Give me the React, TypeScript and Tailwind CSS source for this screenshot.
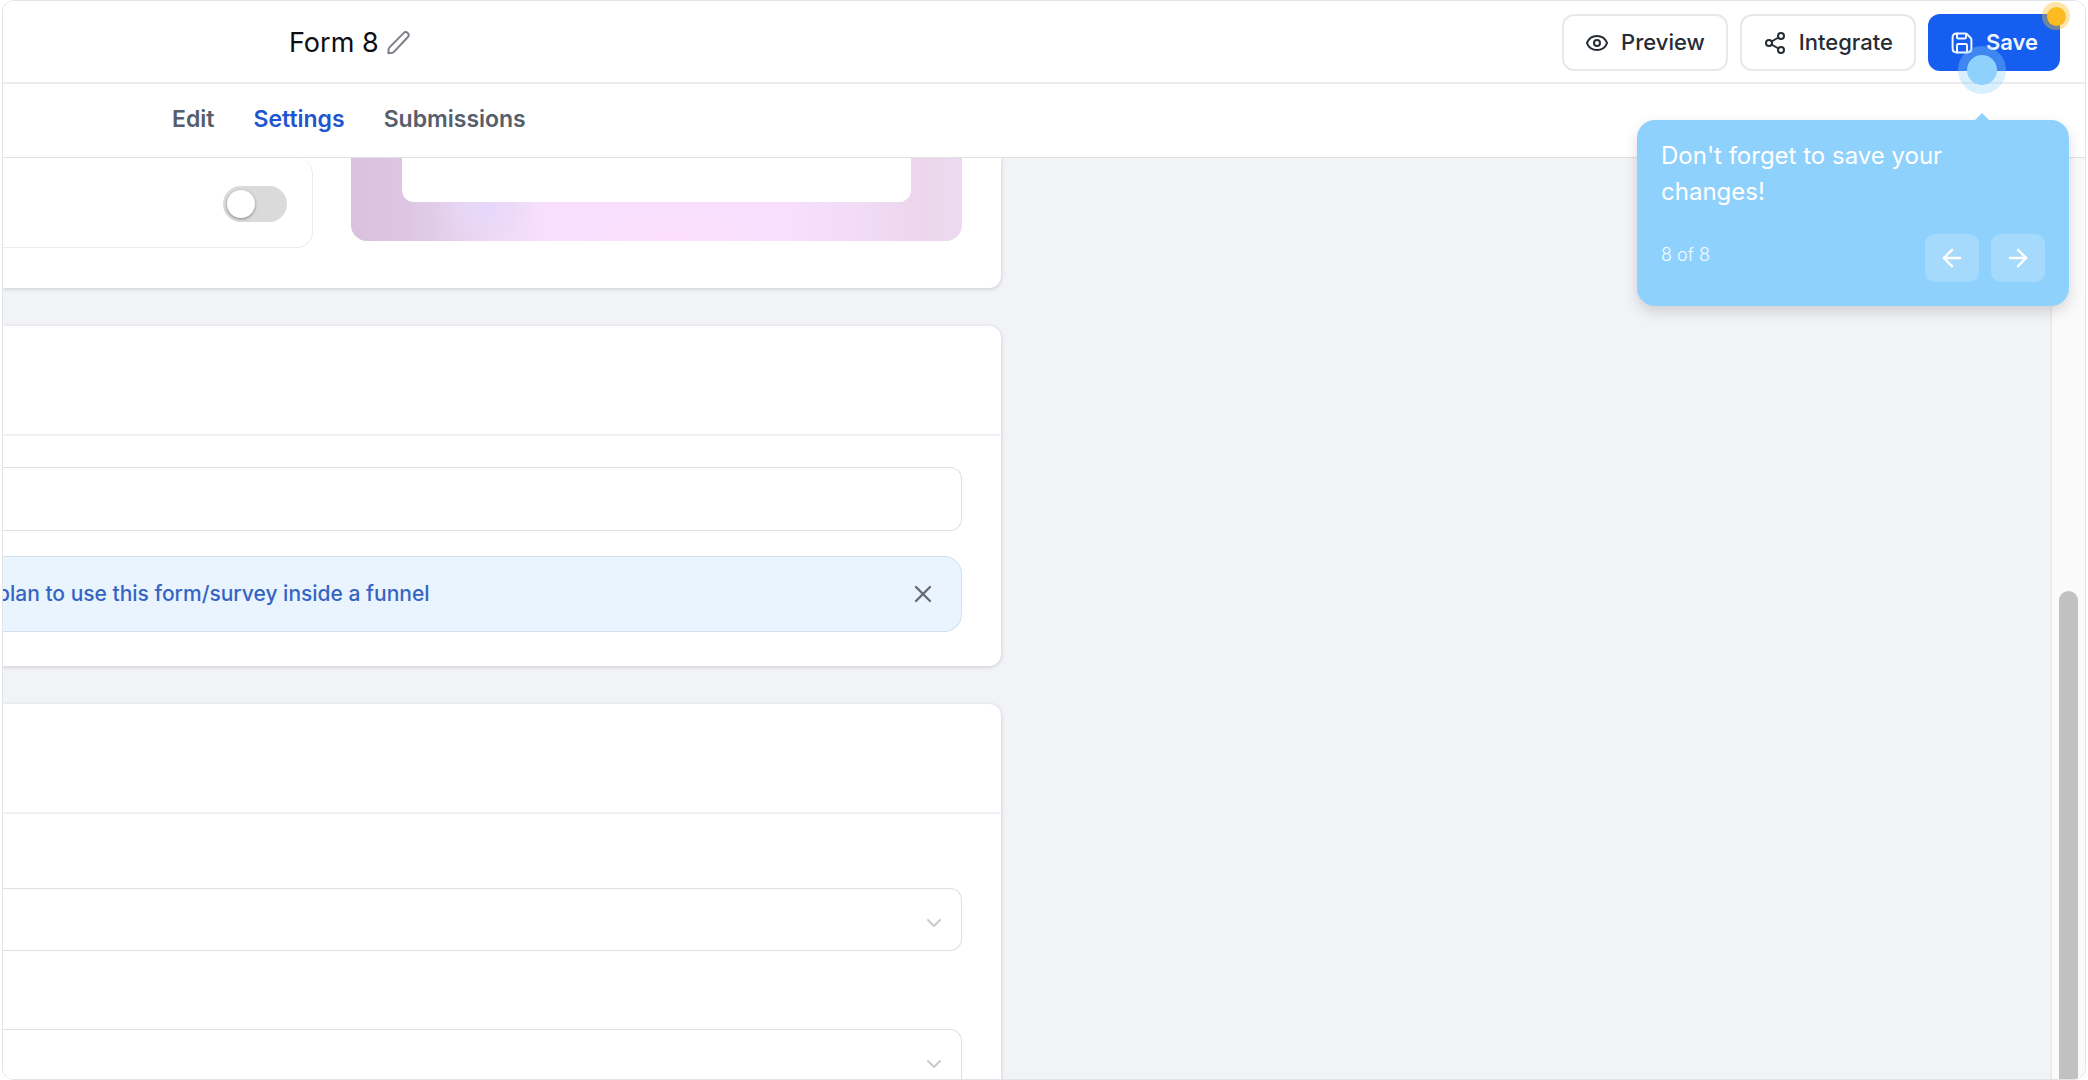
import { ArrowLeft, ArrowRight, ChevronDown, Eye, Share2, X } from 'lucide-react';

const tabs = [
  { name: 'Edit', href: '#edit', active: false },
  { name: 'Settings', href: '#settings', active: true },
  { name: 'Submissions', href: '#submissions', active: false },
];

function PencilIcon() {
  return (
    <svg viewBox="0 0 24 24" className="h-6 w-6" fill="none" stroke="currentColor" strokeWidth="2" strokeLinejoin="round">
      <path d="M1.4 22.2 L1.6 18.4 Q1.7 17.2 2.5 16.4 L16.6 2.1 A2.7 2.7 0 0 1 20.9 6 L7.2 20.6 Q6.4 21.5 5.2 21.7 Z" />
    </svg>
  );
}

function SaveIcon() {
  return (
    <svg viewBox="0 0 24 24" className="h-6 w-6" fill="none" stroke="currentColor" strokeWidth="2" strokeLinecap="round" strokeLinejoin="round">
      <path d="M7 2.6 V6.2 Q7 7.4 8.2 7.4 H14.8 Q16 7.4 16 6.2 V3.2" />
      <path d="M17 21.4 V14.2 Q17 13 15.8 13 H8.2 Q7 13 7 14.2 V21.4" />
      <path d="M21.4 9 V17.2 Q21.4 21.4 17.2 21.4 H6.8 Q2.6 21.4 2.6 17.2 V6.8 Q2.6 2.6 6.8 2.6 H15 Q16.4 2.6 17.3 3.5 L20.5 6.7 Q21.4 7.6 21.4 9 Z" />
    </svg>
  );
}

function TopBar() {
  return (
    <header className="flex h-[83px] shrink-0 items-center justify-between border-b-2 border-[#ececee] bg-white pt-0.5 pr-[25px] pl-[286px]">
      <div className="flex items-center gap-2">
        <h1 className="text-[27px] leading-9 text-[#0c0e12]">Form 8</h1>
        <button type="button" aria-label="Rename form" className="text-[#7b7f87]">
          <PencilIcon />
        </button>
      </div>
      <div className="flex items-center gap-3">
        <button type="button" className="flex h-[57px] items-center gap-3 rounded-xl border-2 border-[#e8e8ea] px-[21px] text-[22px] font-medium text-[#262c36]">
          <Eye className="h-6 w-6" />
          Preview
        </button>
        <button type="button" className="flex h-[57px] items-center gap-3 rounded-xl border-2 border-[#e8e8ea] px-[21px] text-[22px] font-medium text-[#262c36]">
          <Share2 className="h-6 w-6" />
          Integrate
        </button>
        {/* Save, with the tour beacon and its tooltip */}
        <div className="relative">
          <button type="button" className="flex h-[57px] items-center gap-3 rounded-xl bg-[#155eef] px-[22px] text-[22px] font-semibold text-[#f1f5ff]">
            <SaveIcon />
            Save
          </button>
          <span className="absolute -top-3 -right-2.5 flex h-7 w-7 items-center justify-center rounded-full bg-[#fbbf24]/40">
            <span className="h-[19px] w-[19px] rounded-full bg-[#fdbb22]" />
          </span>
          <span className="absolute top-8 right-[54px] z-20 flex h-12 w-12 items-center justify-center rounded-full bg-[#8fd1fd]/35">
            <span className="h-[30px] w-[30px] rounded-full bg-[#8fd1fd]" />
          </span>
          <TourTooltip />
        </div>
      </div>
    </header>
  );
}

function TourTooltip() {
  return (
    <div role="dialog" aria-label="Tour" className="absolute top-[106px] -right-[9px] z-20 w-[432px] rounded-[18px] bg-[#8fd1fd] p-6 text-white shadow-[0_6px_14px_rgba(0,0,0,0.14)]">
      <span className="absolute -top-[7px] right-20 h-0 w-0 border-x-[7px] border-b-[7px] border-x-transparent border-b-[#8fd1fd]" />
      <p className="-mt-1.5 text-2xl leading-9">Don't forget to save your changes!</p>
      <div className="mt-6 flex items-start justify-between">
        <span className="pt-[7px] text-lg font-light text-white/90">8 of 8</span>
        <div className="flex gap-3">
          <button type="button" aria-label="Previous" className="flex h-12 w-[54px] items-center justify-center rounded-[10px] bg-white/20">
            <ArrowLeft className="h-7 w-7" strokeWidth={2} />
          </button>
          <button type="button" aria-label="Next" className="flex h-12 w-[54px] items-center justify-center rounded-[10px] bg-white/20">
            <ArrowRight className="h-7 w-7" strokeWidth={2} />
          </button>
        </div>
      </div>
    </div>
  );
}

function Tabs() {
  return (
    <nav className="flex h-[74px] shrink-0 items-center gap-[39px] border-b border-[#dfe0e4] bg-white pb-[3px] pl-[169px]">
      {tabs.map((tab) => (
        <a
          key={tab.name}
          href={tab.href}
          className={`text-[23px] font-semibold ${tab.active ? 'text-[#1f56d0]' : 'text-[#565e6c]'}`}
        >
          {tab.name}
        </a>
      ))}
    </nav>
  );
}

function SelectBox({ label }: { label: string }) {
  return (
    <div className="relative">
      <select aria-label={label} className="block h-[63px] w-full appearance-none rounded-r-xl border border-l-0 border-[#dedfe2] bg-white" />
      <ChevronDown className="pointer-events-none absolute top-[23px] right-4 h-6 w-6 text-[#c9cacc]" strokeWidth={2} />
    </div>
  );
}

export default function App() {
  return (
    <div className="h-screen bg-white px-0.5 font-['Inter',sans-serif]">
      <div className="flex h-full flex-col overflow-hidden rounded-xl border border-[#e3e4e8] bg-white">
        <TopBar />
        <Tabs />
        <div className="flex min-h-0 flex-1">
          <main className="min-w-0 flex-1 overflow-hidden bg-[#f2f3f7]">
            <div className="flex w-39/80 flex-col gap-[38px]">
              {/* Style card, scrolled part way */}
              <section className="flex gap-[38px] rounded-br-xl bg-white pr-[39px] pb-10 shadow-[0_1px_4px_rgba(16,24,40,0.18)]">
                <div className="flex h-[90px] w-[310px] shrink-0 items-center justify-end rounded-r-2xl border border-t-0 border-l-0 border-[#ebebed] pt-[3px] pr-[25px]">
                  <label className="flex h-9 w-16 items-center rounded-full bg-[#dadada] p-1">
                    <input type="checkbox" role="switch" aria-label="Enable" className="h-7 w-7 appearance-none rounded-full bg-white shadow-[0_1px_3px_rgba(0,0,0,0.4)]" />
                  </label>
                </div>
                <div className="h-[83px] flex-1 rounded-b-2xl bg-[radial-gradient(ellipse_90px_36px_at_53%_100%,#fedffb,transparent),radial-gradient(ellipse_50px_36px_at_22%_60%,#e6d8fb,transparent),linear-gradient(90deg,#d8c2de_0%,#dcc6e2_9%,#eed9f4_23%,#f7dffd_32%,#f7dffd_72%,#f1dbf5_84%,#ebd6ec_94%,#eedaf0_100%)] px-[51px]">
                  <div className="h-11 rounded-b-xl bg-white" />
                </div>
              </section>

              <section className="rounded-r-xl bg-white shadow-[0_1px_4px_rgba(16,24,40,0.18)]">
                <div className="h-[110px] border-b-2 border-[#f1f2f4]" />
                <div className="flex flex-col gap-[25px] pt-[31px] pr-[39px] pb-[34px]">
                  <input type="text" aria-label="Redirect URL" className="h-[64px] w-full rounded-r-xl border border-l-0 border-[#dedfe2] px-4 text-[22px]" />
                  <div className="flex h-[76px] items-center justify-between rounded-r-[18px] border border-l-0 border-[#cfe0f0] bg-[#eaf4fe] pr-6">
                    <p className="-ml-1.5 text-[21px] font-medium whitespace-nowrap text-[#3565c4]">plan to use this form/survey inside a funnel</p>
                    <button type="button" aria-label="Dismiss" className="text-[#666a70]">
                      <X className="h-7 w-7" strokeWidth={2} />
                    </button>
                  </div>
                </div>
              </section>

              <section className="rounded-tr-xl bg-white shadow-[0_1px_4px_rgba(16,24,40,0.18)]">
                <div className="h-[110px] border-b-2 border-[#f1f2f4]" />
                <div className="flex flex-col gap-[78px] pt-[74px] pr-[39px] pb-12">
                  <SelectBox label="Submit action" />
                  <SelectBox label="Language" />
                </div>
              </section>
            </div>
          </main>

          {/* Scrollbar */}
          <div className="flex w-[35px] shrink-0 flex-col border-l-2 border-[#ebebef] bg-[#fafafa] px-[7px]">
            <div className="grow-[47]" />
            <div className="grow-[53] rounded-t-full bg-[#c1c1c1]" />
          </div>
        </div>
      </div>
    </div>
  );
}
